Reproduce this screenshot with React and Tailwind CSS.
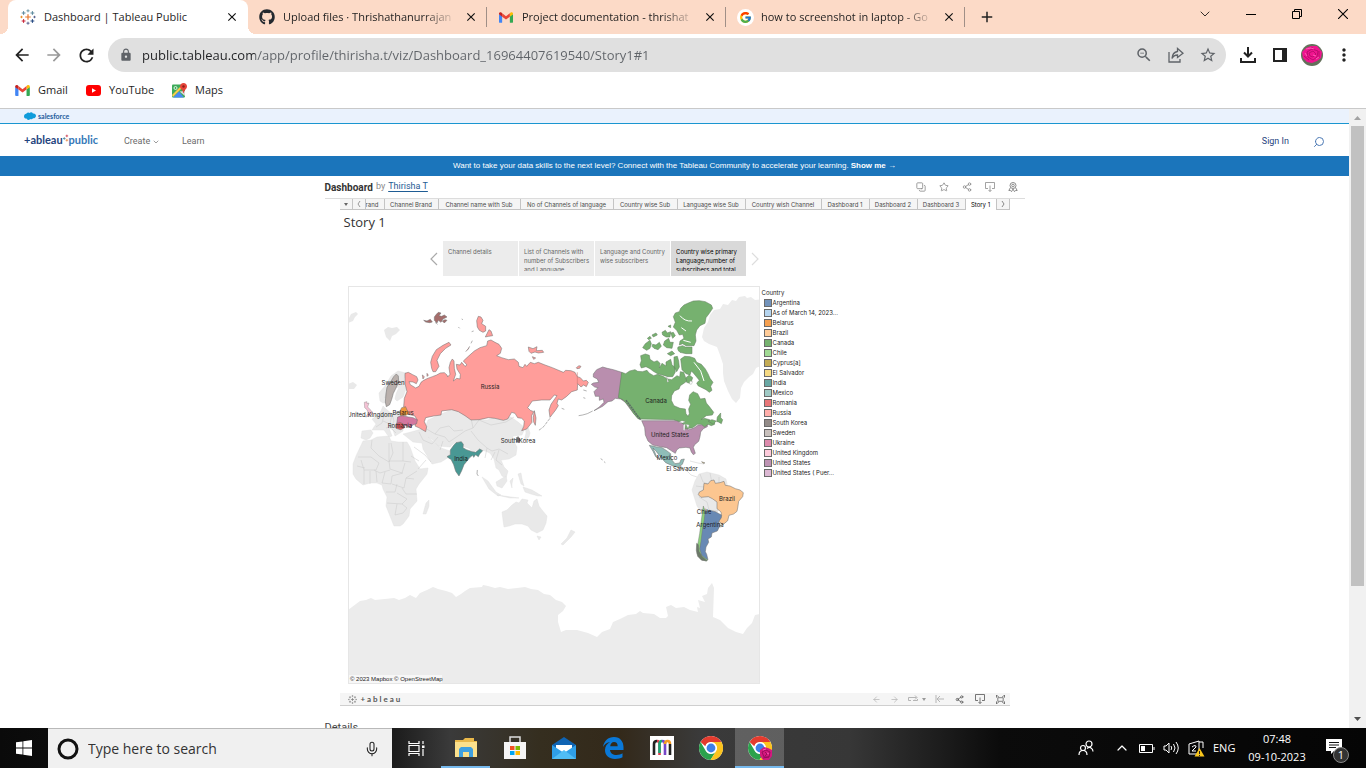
import React from "react";
import {
  MdArrowBack, MdArrowForward, MdRefresh, MdLock, MdClose, MdAdd, MdMoreVert, MdStarBorder, MdZoomOut,
} from "react-icons/md";
import { FaGithub } from "react-icons/fa";
import { FcGoogle } from "react-icons/fc";
import {
  Copy, Star, Share2, ArrowLeft, ArrowRight, Mic, ChevronUp, ChevronDown, Search,
} from "lucide-react";

const UI = "font-['Open_Sans','Noto_Sans',sans-serif]";

function TableauMark({ className = "", mono = false }) {
  const plus = (x, y, r) => `M${x - r} ${y}h${2 * r}M${x} ${y - r}v${2 * r}`;
  const c = (v) => (mono ? "#777" : v);
  return (
    <svg viewBox="0 0 16 16" fill="none" className={className} aria-hidden="true">
      <path d={plus(8, 8, 2.8)} stroke={c("#e8762c")} strokeWidth="1.2" />
      <path d={plus(3.6, 4, 1.9)} stroke={c("#5b879b")} strokeWidth="1" />
      <path d={plus(12.4, 4, 1.9)} stroke={c("#59879b")} strokeWidth="1" />
      <path d={plus(3.6, 12, 1.9)} stroke={c("#c72035")} strokeWidth="1" />
      <path d={plus(12.4, 12, 1.9)} stroke={c("#1f447e")} strokeWidth="1" />
      <path d={plus(8, 1.8, 1.5)} stroke={c("#7099a6")} strokeWidth="1" />
      <path d={plus(8, 14.2, 1.5)} stroke={c("#5c6692")} strokeWidth="1" />
      <path d={plus(1.5, 8, 1.2)} stroke={c("#eb912c")} strokeWidth="1" />
      <path d={plus(14.5, 8, 1.2)} stroke={c("#5c6692")} strokeWidth="1" />
    </svg>
  );
}

function GmailMark({ className = "" }) {
  return (
    <svg viewBox="0 0 16 12" className={className} aria-hidden="true">
      <path d="M0 2v9a1 1 0 0 0 1 1h2.6V4.5z" fill="#4285f4" />
      <path d="M16 2v9a1 1 0 0 1-1 1h-2.6V4.5z" fill="#34a853" />
      <path d="M12.4 1.2V5L16 2.4V1.6C16 .2 14.400-.5 13.300.4z" fill="#fbbc04" />
      <path d="M3.600 5V1.200L8 4.500l4.400-3.300V5L8 8.300z" fill="#ea4335" />
      <path d="M0 1.600v.8L3.600 5V1.200L2.700.4C1.600-.5 0 .2 0 1.600z" fill="#c5221f" />
    </svg>
  );
}

function ChromeMark({ className = "", rose = false }) {
  return (
    <svg viewBox="0 0 24 24" className={className} aria-hidden="true">
      <circle cx="12" cy="12" r="12" fill="#fff" />
      <path d="M12 0a12 12 0 0 1 10.390 6H12a6 6 0 0 0-5.700 4.200L1.610 6A12 12 0 0 1 12 0z" fill="#e33b2e" />
      <path d="M1.610 6A12 12 0 0 0 11.500 24l5.700-9A6 6 0 0 1 6.800 15z" fill="#2ba24c" />
      <path d="M22.390 6A12 12 0 0 1 11.500 24l5.700-9A6 6 0 0 0 12 6z" fill="#fcc31e" />
      <circle cx="12" cy="12" r="5.600" fill="#fff" />
      <circle cx="12" cy="12" r="4.400" fill="#3f7fe8" />
      {rose && (
        <g>
          <path d="M12 14l4-3 4 1 4 2v6l-3 4h-6l-3-4z" fill="#d3187f" />
          <path d="M14 16l4-2 4 2-1 5-5 0zM17 16l2 2-2 2M15 22l6-1" stroke="#8d0b51" strokeWidth=".8" fill="none" />
          <path d="M15 14l3-1M19 17l2 1" stroke="#ff6fc0" strokeWidth=".8" fill="none" />
        </g>
      )}
    </svg>
  );
}

function Rose() {
  return (
    <svg viewBox="0 0 22 22" className="size-[22px]" aria-hidden="true">
      <circle cx="11" cy="11" r="11" fill="#63705a" />
      <path d="M1 8l4-4 5-2 6 0 5 6-1 6-4 3-5 2-5-1-4-4z" fill="#f0148f" />
      <path d="M6 8l5-3 6 2-1 6-4 3-5-3zM8 9l4-2 3 3-3 3-3-1zM3 12l5 4M18 7l0 7M10 3l3 2" stroke="#a80862" strokeWidth=".7" fill="none" />
      <path d="M5 5l5-1 3 1M12 11l3 1M4 9l2 3M15 15l3-2" stroke="#ff62b8" strokeWidth=".9" fill="none" />
    </svg>
  );
}

function Tab({ icon, title, active }) {
  return (
    <div
      className={
        "relative flex h-[34px] items-center " +
        (active ? "w-[240px] rounded-t-lg bg-white pl-3" : "w-[239px] pl-[11px]")
      }
    >
      {active && (
        <>
          <span className="absolute bottom-0 -left-2 size-2 bg-[radial-gradient(circle_at_0_0,transparent_8px,white_8px)]" />
          <span className="absolute bottom-0 -right-2 size-2 bg-[radial-gradient(circle_at_100%_0,transparent_8px,white_8px)]" />
        </>
      )}
      <span className="flex w-4 shrink-0 justify-center">{icon}</span>
      <span
        className={
          "ml-2 w-[172px] shrink-0 overflow-hidden text-[11px] whitespace-nowrap text-[#1f1f1f] " +
          (active ? "" : "[mask-image:linear-gradient(to_right,black_140px,transparent_174px)]")
        }
      >
        {title}
      </span>
      <button aria-label={"Close " + title} className="ml-2 flex size-4 shrink-0 items-center justify-center">
        <MdClose className="size-[14px] text-[#111]" />
      </button>
      {!active && <span className="ml-auto h-5 w-px bg-[#a08f87]" />}
    </div>
  );
}

function BrowserChrome() {
  return (
    <header className={"shrink-0 border-b border-[#c9c9c9] bg-white " + UI}>
      <div className="flex h-[34px] bg-[#fcdac7] pl-2">
        <Tab active icon={<TableauMark className="size-4" />} title="Dashboard | Tableau Public" />
        <Tab icon={<FaGithub className="size-4 text-[#24292f]" />} title="Upload files · Thrishathanurrajan" />
        <Tab icon={<GmailMark className="h-[11px] w-[14px]" />} title="Project documentation - thrishat" />
        <Tab
          icon={<span className="rounded-full bg-white p-[2px]"><FcGoogle className="size-[13px]" /></span>}
          title="how to screenshot in laptop - Go"
        />
        <button aria-label="New tab" className="flex w-11 items-center justify-center">
          <MdAdd className="size-[18px] text-[#222]" />
        </button>
        <div className="ml-auto flex h-7">
          <button aria-label="Search tabs" className="flex w-[46px] items-center justify-center">
            <ChevronDown className="size-4" strokeWidth={1.2} />
          </button>
          <button aria-label="Minimise" className="flex w-[46px] items-center justify-center">
            <span className="h-px w-[10px] bg-black" />
          </button>
          <button aria-label="Restore" className="flex w-[46px] items-center justify-center">
            <svg viewBox="0 0 10 10" className="size-[10px]" fill="none" stroke="#000">
              <path d="M.5 2.500h7v7h-7zM2.500 2.500v-2h7v7h-2" />
            </svg>
          </button>
          <button aria-label="Close window" className="flex w-[46px] items-center justify-center">
            <svg viewBox="0 0 10 10" className="size-[10px]" fill="none" stroke="#000" strokeWidth="1.100">
              <path d="M0 0l10 10M10 0L0 10" />
            </svg>
          </button>
        </div>
      </div>
      <div className="flex h-[42px] items-center pr-[6px] pl-[6px]">
        <button aria-label="Back" className="flex w-8 justify-center"><MdArrowBack className="size-5 text-[#222]" /></button>
        <button aria-label="Forward" className="flex w-8 justify-center"><MdArrowForward className="size-5 text-[#999]" /></button>
        <button aria-label="Reload" className="flex w-8 justify-center"><MdRefresh className="size-[21px] text-[#222]" /></button>
        <div className="ml-[6px] flex h-[34px] flex-1 items-center rounded-full bg-[#e0e0e0] pr-[2px] pl-[11px]">
          <MdLock className="size-[14px] text-[#5f6368]" />
          <input
            aria-label="Address"
            defaultValue="public.tableau.com/app/profile/thirisha.t/viz/Dashboard_16964407619540/Story1#1"
            className="ml-[9px] h-6 flex-1 bg-[linear-gradient(to_right,#202124_113px,#5f6368_113px)] bg-clip-text text-[13px] text-transparent outline-none"
          />
          <button aria-label="Zoom" className="flex w-8 justify-center"><MdZoomOut className="size-[18px] text-[#5f6368]" /></button>
          <button aria-label="Share page" className="flex w-8 justify-center">
            <svg viewBox="0 0 16 16" className="size-4" fill="none" stroke="#5f6368" strokeWidth="1.300">
              <path d="M1 5v10h11v-3M9.500 4.500V1.500L15 6.200 9.500 10.500V8C7 8 5.200 9 4 11.500 4.300 7.500 6 5 9.500 4.500z" />
            </svg>
          </button>
          <button aria-label="Bookmark" className="flex w-8 justify-center"><MdStarBorder className="size-[18px] text-[#5f6368]" /></button>
        </div>
        <div className="ml-[6px] flex items-center">
          <button aria-label="Downloads" className="flex w-8 justify-center">
            <svg viewBox="0 0 16 16" className="size-4" fill="none" stroke="#222" strokeWidth="2">
              <path d="M8 0v9M4 5.500l4 4 4-4M1 11v4h14v-4" />
            </svg>
          </button>
          <button aria-label="Side panel" className="flex w-8 justify-center">
            <svg viewBox="0 0 14 14" className="size-[14px]" fill="none" stroke="#222" strokeWidth="2">
              <path d="M1 1h12v12H1z" /><path d="M9 0h5v14H9z" fill="#222" stroke="none" />
            </svg>
          </button>
          <button aria-label="Profile" className="flex w-8 justify-center"><Rose /></button>
          <button aria-label="Menu" className="flex w-8 justify-center"><MdMoreVert className="size-5 text-[#222]" /></button>
        </div>
      </div>
      <nav className="flex h-8 items-center pb-1 pl-[15px] text-[11px] text-[#1f1f1f]">
        <a href="#gmail" className="flex w-[71px] items-center gap-2">
          <GmailMark className="h-[11px] w-[15px]" />Gmail
        </a>
        <a href="#youtube" className="flex w-[86px] items-center gap-2">
          <svg viewBox="0 0 15 11" className="h-[11px] w-[15px]"><rect width="15" height="11" rx="3" fill="#f00" /><path d="M6 3.200v4.600l4-2.300z" fill="#fff" /></svg>
          YouTube
        </a>
        <a href="#maps" className="flex items-center gap-2">
          <svg viewBox="0 0 15 15" className="size-[15px]">
            <rect y="1.500" width="13" height="13" rx="1" fill="#3dab5a" />
            <path d="M1 14.500l6-6 5 6z" fill="#4a89f3" /><path d="M0 12l9-9 1.500 1.500L1 14z" fill="#f7cb4d" /><path d="M7.500 8.500l5.500 4.500V8z" fill="#d9d9d9" />
            <circle cx="3.500" cy="5" r="1.500" fill="none" stroke="#fff" strokeWidth=".8" />
            <path d="M11.500 0C9.500 0 8 1.500 8 3.500c0 2.300 2.700 3 3.300 6.500h.5C12.500 6.500 15 5.800 15 3.500 15 1.500 13.500 0 11.500 0z" fill="#e5443a" />
            <circle cx="11.500" cy="3.500" r="1.200" fill="#8c1f17" />
          </svg>
          Maps
        </a>
      </nav>
    </header>
  );
}

function SiteHeader() {
  return (
    <div className="font-[Roboto,sans-serif]">
      <div className="flex h-[15px] items-center gap-[2px] border-b border-[#1a96d0] bg-[#eaf2fd] pl-6">
        <svg viewBox="0 0 12 8" className="h-2 w-3"><path d="M2.500 1.500C3.500 0 5 .3 5.500 1 6.500-.2 8.200 0 9 1.500c1.700-.4 3 .7 3 2.200C12 5.500 10.500 6.500 9 6.200 8.200 7.500 6.800 7.300 6.200 7 5 8.500 3 8 2.500 6.500 1 6.700 0 5.700 0 4.400 0 3 .8 2.300 1.500 2z" fill="#109cdb" /></svg>
        <span className="font-[Lato,sans-serif] text-[7px] font-bold text-[#1c5b9c]">salesforce</span>
      </div>
      <div className="flex h-8 items-center pr-6 pl-6 text-[9px] text-[#6b6b6b]">
        <a href="#home" className="flex w-[100px] items-center font-[Lato,sans-serif] text-[11px] font-bold">
          <span className="text-[#1f447e]">+ableau</span>
          <svg viewBox="0 0 7 9" className="mb-1 h-[9px] w-[6px]" fill="none">
            <path d="M0 4.500h3M1.500 3v3" stroke="#59879b" /><path d="M3 1.500h3M4.500 0v3" stroke="#c72035" strokeWidth=".8" /><path d="M3 6.500h3M4.500 5v3" stroke="#e8762c" strokeWidth=".8" />
          </svg>
          <span className="text-[#3578b8]">public</span>
        </a>
        <div className="flex flex-1 items-center pt-[3px]">
          <button className="flex w-[58px] items-center gap-[2px]">Create<ChevronDown className="size-2" strokeWidth={2} /></button>
          <a href="#learn">Learn</a>
          <a href="#signin" className="ml-auto mr-6 text-[#1f447e]">Sign In</a>
          <button aria-label="Search" className="flex size-3 items-center"><Search className="size-3 -scale-x-100 text-[#4d7ab5]" strokeWidth={2} /></button>
        </div>
      </div>
      <div className="flex h-5 items-center justify-center gap-[2px] bg-[#1b75bb] font-['Liberation_Sans',Arial,sans-serif] text-[8px] text-white">
        <span>Want to take your data skills to the next level? Connect with the Tableau Community to accelerate your learning.</span>
        <a href="#community" className="font-bold">Show me →</a>
      </div>
    </div>
  );
}

const DownloadGlyph = () => (
  <svg viewBox="0 0 10 10" className="size-[10px]" fill="none" stroke="currentColor" strokeWidth=".8"><path d="M3 6.500H.5v-6h9v6H7M5 3.500v6M3.500 8L5 9.500 6.500 8" /></svg>
);
const AwardGlyph = () => (
  <svg viewBox="0 0 10 10" className="size-[10px]" fill="none" stroke="currentColor"><circle cx="5" cy="3.500" r="3" /><circle cx="5" cy="3.500" r="1.300" /><path d="M2.500 5.500L.8 8.500l1.700 0 1 1.200L5 7l1.500 2.700 1-1.200 1.700 0-1.700-3" /></svg>
);

const SHEETS = [
  ["rand", "w-[19px] justify-start"],
  ["Channel Brand", "w-[54px] justify-center"],
  ["Channel name with Sub", "w-[82px] justify-center"],
  ["No of Channels of language", "w-[93px] justify-center"],
  ["Country wise Sub", "w-[64px] justify-center"],
  ["Language wise Sub", "w-[68px] justify-center"],
  ["Country wish Channel", "w-[76px] justify-center"],
  ["Dashboard 1", "w-[48px] justify-center"],
  ["Dashboard 2", "w-[48px] justify-center"],
  ["Dashboard 3", "w-[48px] justify-center"],
];

const POINTS = [
  "Channel details",
  "List of Channels with number of Subscribers and Language",
  "Language and Country wise subscribers",
  "Country wise primary Language,number of subscribers and total",
];

const LEGEND = [
  ["Argentina", "bg-[#7393bb]"],
  ["As of March 14, 2023...", "bg-[#b5d4ee]"],
  ["Belarus", "bg-[#f5a050]"],
  ["Brazil", "bg-[#fecb98]"],
  ["Canada", "bg-[#76b26f]"],
  ["Chile", "bg-[#a1da94]"],
  ["Cyprus[a]", "bg-[#c3ab54]"],
  ["El Salvador", "bg-[#f5d983]"],
  ["India", "bg-[#6aa8a4]"],
  ["Mexico", "bg-[#a0cac5]"],
  ["Romania", "bg-[#e87678]"],
  ["Russia", "bg-[#ffaeaa]"],
  ["South Korea", "bg-[#938b88]"],
  ["Sweden", "bg-[#c8c0bc]"],
  ["Ukraine", "bg-[#dc8aac]"],
  ["United Kingdom", "bg-[#fccada]"],
  ["United States", "bg-[#be93b3]"],
  ["United States ( Puer...", "bg-[#dcb8d3]"],
];

const LABELS = [
  ["Russia", 490, 389], ["Sweden", 393, 385], ["United Kingdom", 370, 417], ["Belarus", 403, 415],
  ["Romania", 400, 428], ["South Korea", 518, 443], ["India", 461, 461], ["Canada", 656, 403],
  ["United States", 670, 437], ["Mexico", 667, 460], ["El Salvador", 682, 471], ["Brazil", 727, 501],
  ["Chile", 704, 514], ["Argentina", 710, 527],
];

function WorldMap() {
  return (
    <svg viewBox="348 286 412 398" className="h-[398px] w-[412px] shrink-0" role="img" aria-label="World map of countries">
      <rect x="348" y="286" width="412" height="398" fill="#fff" />
      {/* land without data */}
      <g fill="#e9e9e9" stroke="#dedede" strokeWidth=".4" strokeLinejoin="round">
        <path stroke="none" fill="#ececec" d="M348 610L352 607 356 604 360 601 366 600 371 598 375 600 385 599 394 598 399 600 405 598 410 595 416 598 420 593 427 590 433 587 438 589 446 591 452 593 456 597 461 594 465 591 470 588 482 587 483 585 488 586 495 588 500 587 508 589 517 588 525 587 531 589 538 590 544 594 550 595 556 600 562 602 566 606 563 611 558 615 558 622 561 632 566 630 577 630 588 633 597 637 602 632 610 629 613 622 620 619 628 615 636 614 640 611 643 613 654 614 660 618 666 618 668 616 666 607 671 605 676 608 684 607 690 610 698 612 697 607 700 608 698 600 705 602 702 596 707 594 708 588 712 583 714 588 713 617 720 620 728 628 736 632 743 634 747 628 752 623 755 615 760 614V684H348z" />
        <path stroke="none" fill="#ececec" d="M702 337l2-9 4-6 2-7 4-5 6-1 3-5 5 1 4-5 4 1 3-4 6-1 2 2 4-1 4 3 8-1v66l-7 3-3 6-4 3-5 5-3 6-1 10-4 5-4-4-4-8-4-10-1-8 0-9-3-9-3-8-8-3-5-3z" />
        <path stroke="none" d="M348 320l3-6 5-2 2 2-3 3-2 4-5 2zM384 330l4-3 4 1 5-1 3 3-4 4-4 2-2 5-4-4zM348 384l5-2 4 3-3 4-6 0z" />
        <path d="M363 441l8-1 6-3 12-1 2 5 7 1 9 0 3 5 5 14 5 8 8-1-1 6-8 10-3 5 1 12-7 8-1 7-6 8-3 2-6 0-4-10-4-10 1-9-4-8-1-4-5-2-7 0-7 2-7-6-3-5 0-10 3-8z" />
        <path d="M426 503l3-3 0 6-3 8-3 0zM362 431l9-1 2 3-3 5-4 2-5-2zM372 430l4-6-4-5 5-3 4-5 2-5 3 3 6 5 12-3-1 20-8 5-2-6-4-2 3 8-3 1-5-7-4 0zM380 401l-1-8 6-7 6-10 7-5 8 2-2 6 2 10-3 8-6 4-2-2 1-5 3-7-4 1-4 4-4 11-4 0z" />
        <path d="M403 434l8-2 14-4 3-8 11-5 14-6 8 3 7 4 6 3 13 1 10-3 8 0 6 0 7 5 7 6-3 7-9 1 0 4 4 7-1 8-7 4-8 1 3 7 4 4-2 7-4-2-3-6-3-2-2-9-4-6-5-2-6-2-5 3-6-4-7-2-6-4-5 5-12-1-5-6-5-3 7 6 6 5 9 3-1 6-8 5-9 2-9-15-1-6-9-1z" />
        <path d="M482 477l6 4 8 11 5 3-3 1-9-7zM496 482l5-3 5-3 1 5-5 7-5-2zM510 481l3-3-1 6 0 4zM523 487l9 3 10 6-4 0-7-2-6-2zM497 495l14 2 8 1-9 0z" />
        <path d="M502 512l5-2 5-5 4-3 3 1 3-4 6 1-1 3 5 5 2-7 3-2 2 7 3 4 5 6-1 7-3 7-6 3-6-3-3-4-6-2-7 0-6 2-5 1-1-7zM537 536l4 1-2 3zM571 530l4 2-4 5-8 8-2-1 6-6z" />
        <path d="M518 474l3-1 1 6 2 7-3-2zM525 425l3 2 2 6-1 4-5 4 2-8z" />
        <path d="M692 490l3-9 4-7 8-2 12 3 7 4 3 14-13 21 7 6-2 8-17-12-7-10z" />
        <path d="M682 468l5 3 4 4 6 2M690 461l8 2 6 1" fill="none" stroke="#bbb" />
      </g>
      <g fill="none" stroke="#c8c8c8" strokeWidth=".5">
        <path d="M372 440l-1 8 8 8 10 6 4-9-2-10M358 457h13l8 6-3 7-12 0-3-10M389 443l0 18 14 0M403 442v19l8 1M389 461l1 8 12 4 3-10M374 470l6 3 10-3M364 470v14M370 471l0 13M376 471l1 11M385 472l-3 11 9 1 1-8 11-3M392 484l12 4 2-10 8 1M386 492l9 0 2-8M387 503l15 1 5-5-10-6M397 504l-2 11 8-2 4-5-5-4M402 488l4 6 11 0M357 466l8 2M406 478l11-7M411 456l8 5M376 427l6-4 2-8M383 421l7 3 2-10M386 428l7-2M392 414l2 7-3 7M396 433l-4-4M385 398l3-14 5-6" />
        <path d="M425 428l10 6 10 3 4 5 9-6 7-5 8-3-2-10M435 434l5-6 9-2 5 5 9-1M419 432l4 8 9 4 6-7M440 450l3-9M473 428l6-8 12 5 15-3 8-5M471 431l7 9 9 8 5 3 7-2 9 5M487 448l-2 10M491 460l4-8M499 450l-3 10 6 5M414 447l11 8 6 7M426 460l-8 9" />
        <path d="M700 474l3 8 8 3M710 473l2 10M719 477l0 6M696 486l7 1 4-4M699 497l8 5 2 8M707 510l11 1" />
      </g>
      <g stroke="#6f6f6f" strokeWidth="1.600" strokeLinejoin="round" transform="translate(345 285) scale(.33333)">
        <g fill="#ff9d9a">
          <path d="M180 265L190 262 203 269 215 275 219 285 214 296 204 291 192 290 196 299 212 309 222 304 228 292 236 286 246 281 262 275 275 270 286 264 298 263 306 270 308 276 315 268 312 248 316 232 322 222 327 228 328 250 332 268 325 288 335 280 345 282 346 268 336 252 334 238 345 240 350 232 360 244 366 240 355 228 370 214 388 198 405 188 425 182 428 168 438 165 450 172 462 178 470 190 466 205 455 212 470 218 490 224 508 222 520 232 522 244 534 248 540 238 545 244 556 232 568 236 580 232 600 240 622 248 655 262 662 256 678 257 690 262 697 275 706 278 715 288 724 286 730 292 724 305 716 300 708 306 698 296 697 315 680 320 664 335 650 345 640 342 636 355 640 362 632 375 622 388 615 397 612 375 618 358 636 332 628 330 615 345 590 345 562 348 548 368 556 376 566 380 560 392 561 412 545 432 530 437 536 425 538 408 530 400 518 398 510 385 500 382 488 402 475 406 450 400 430 398 402 404 378 405 360 392 340 380 320 374 290 378 288 390 266 393 242 398 238 410 245 425 242 440 225 430 210 423 216 405 210 393 190 388 186 375 176 365 178 340 186 320 180 295z" />
          <path d="M260 250l-3-18 5-18 12-20 20-13 18-9 6 8-16 10-16 16-10 20 6 18-10 16-8 0z" />
          <path d="M395 107l5-13 8 2 6 10-4 10 12 8 0 14-8 4-11-6-6-10zM432 134l6 4 5 14-12 2-10 2z" />
          <path d="M550 186l14 5 12-6-2 12 18-1 4 6-16 2-10-3-12 4-6-6zM562 215l10 4-6 4zM694 248l8-6 6 2-4 6-8 1zM232 270l6 5-4 7zM246 265l4 6-4 3zM568 377l5 22-2 22-5-10-1-14z" />
        </g>
        <g fill="#a56d6b">
          <path d="M236 106l10 2 10-5 6 8-8 2-12-2zM268 96l6-8 6-6 8 2-6 8 8 2 8-4 8 6-12 6-6 10-8-6-4 8-8-8zM292 108l8-4 6 2-8 8zM270 112l8 6M350 102l4 2M340 126l4 4M380 140l6-2M362 200l8-8 4-8M378 175l4-8" />
        </g>
        <path d="M615 400l-8 10-10 14-10 8-6 4M650 370l8 3" fill="none" strokeDasharray="10 3" />
        <path fill="none" stroke="#c76f6c" d="M697 262v34" />
        <path fill="#499894" d="M333 473l16-3 6 8-1 10 10 6 18 6 10 2 12-10 9 5-9 10-4 8-8-6-6 8-3-6-8 6-18 22-7 18-8 16-10-14-6-20-8-16-4-2-8-6 10-6 0-14 10-14z" />
        <path fill="#b9b0ac" d="M146 275l8-8 6 6 1 18-8 18-8 16-5 18-6 16-10 6-3-14 2-24 3-20 10-14z" />
        <path fill="#f1963a" d="M164 380l6-12 12-3 4 10 6 8-8 8-18 1z" />
        <path fill="#d4779f" d="M158 396l14-4 18 4 14 2 13 6-2 12-12 4-6 8-14-6-12-6-16 2z" />
        <path fill="#e25b60" d="M154 416l10-4 10 4 5 12-12 6-14-4z" />
        <path fill="#f4c2d4" strokeWidth="1" d="M58 352l8-2 0 6 6-2-4 12 8 8 7 10-6 8-15 4 8-12-4-10-7-6z" />
        <path fill="#6f6a68" d="M514 458l6-3 5 8-3 10-7-2z" />
        <g transform="translate(615 0)">
          <g fill="#b98eae">
            <path d="M130 267L140 254 158 246 172 250 190 254 215 262V340L229 346 241 362 259 386 272 404 262 398 242 374 226 352 212 342 196 340 186 348 174 350 158 364 146 370 132 377 148 366 162 352 160 342 148 346 148 334 136 334 132 320 144 308 134 306 124 298 130 294 146 292 142 282 130 276z" />
            <path fill="none" d="M128 378l-16 8-14 4-12 2M100 315l10 3M100 338l6 2" />
            <path d="M275 407h105l18 4 14 8 2 16 18-6 12-8 12-2 8-6 8 2 0 10-12 6-8 10-2 14-4 14-12 10-4 8 6 18-6 4-6-8-4-12-12-2-20 2-8 6-4 10-14-9-12-8-24-4-18-4-14-12-8-18-2-22z" />
          </g>
          <path fill="#8fbdb8" d="M298 481l22 5 16 2 14 9 12 9 1 16 12 14 14-2 4-10 10-2-6 16-12 8-16-3-22-10-16-18-14-18-8-8 10 24 6 8-8-6-8-16z" />
          <path fill="#d9c27a" d="M388 546l10 4-2 3zM455 530l10 4-6 1z" />
          <path fill="#777" d="M152 521l6 4M162 530l4 3" />
          <g fill="#76b16f" stroke="#657e60">
            <path d="M215 262l12 4 12-8 16-4 8 5 14 1 14-4 6 8 14 8 12-4 16 6 14 8 12 2 16-12 8 4 2-16 10 2 6 16 6 8-10 8-12 8-4 10-14 6-8 14-1 14 8 16 18 8 16 2 2 14 6 8 4-8-2-14 6-14-6-12 3-16 10-10 14 6 8 16 14-2 4 14 10 12 12 16-4 8-18 2-16 12 10-4 16 4 0 8 14-2 1 8-10 4-10-4-10 8-10-8-12 0-14 10-22 4-2-12-14-10-20-6-105-2-14-16-14-22-18-20-14-6z" />
            <path d="M272 212l14-5 12 4 2 12 12 8 10-4 8 8-2 14 8-14 12 8 0-12 14-8 4 16 8 8 2 14-8 14-14 0-20-6-10-2-14-8-10-8-12-6-14 4-4-10 4-12zM372 216l10-2 4 14 2 18-8 14-8-14z" />
            <path d="M392 222L404 214 420 215 434 220 440 232 454 238 466 252 474 266 480 280 489 292 482 304 486 316 478 322 468 314 456 308 444 302 440 294 448 286 440 276 430 264 424 258 420 270 408 266 396 254z" />
            <path d="M370 95L376 84 388 80 392 70 402 60 415 54 430 48 448 47 466 50 484 60 488 70 478 85 468 98 465 115 450 122 440 135 436 150 438 168 432 182 408 182 398 176 388 180 390 168 402 160 398 148 388 150 380 136 370 126 376 112z" />
            <path d="M384 186l14-4 8 4 20 0 0 20-18 0-18-4-8-8z" />
            <path d="M278 188l8-12 14-10 4 10-4 14-10 6zM308 178l10 2 10-8 6 12-10 10-12-4-6-6zM306 150l12-6 4 6-12 6zM292 160l8-6 4 6-8 4zM336 142l10-6 6 8 10-4-2 16-12 0-10-6zM344 168l12-8 4 12 10 0-4 18-16-2-10-8zM354 124l8-4 0 8zM352 206l14-8 8 8-12 6zM362 144l8-2 6 10-8 8zM408 278l10-8 10 8-6 18-12-4zM474 408l12-4 12 4-8 10zM500 410l2-14 10-12 0 14 6 6-4 12-10-6z" />
            <path d="M228 346l6 8 8 10 10 14 10 14 10 12" fill="none" stroke="#5d6e66" strokeWidth="5" strokeDasharray="6 2" />
          </g>
          <g fill="#fff" stroke="#8a8a8a" strokeWidth="1"><path d="M386 412l10-5 10 3-8 4zM400 420l6-4-2 22-4-4zM408 418l10 2-4 10zM420 288l8 2-4 8-6-2zM350 276l6 14-4 2z" /><path d="M390 92q14 18 36 16M394 128l14 10M400 166l22 6M380 190l4 16M432 232l20 26 10 30" fill="none" stroke="#fff" strokeWidth="3" /></g>
        </g>
        <g transform="translate(285 525)">
          <path fill="#fcc690" d="M778 96l12-6 2-20 12 2 8-10 10-2 4 10 14-2 12-4 4 12 14 2 16 8 14 4 10 8-2 12-12 14-3 20-2 10-10 8-14 4-4 16-14 12-14-12 10-14-2-12-12-10 0-20-14-10-12-6-22 2-8-8z" />
          <path fill="#6889b4" d="M796 154l12-3 18 4 18 10 0 8-8 12 4 12-8 16-16 6-2 12-10 6 2 10-8 14-2 14 4 8 4 16-18-4-8-24 6-60z" />
          <path fill="#8cd17d" strokeWidth="1.200" d="M790 138l5 14-2 26-6 32-4 34-4 22 6 20 18 14-4 4-16-6-12-18 2-26 6-34 5-40z" />
          <path fill="#6b7a68" d="M770 250l5 4 2 20 10 16 14 12-16-1-12-12-4-18z" />
          <path fill="none" d="M112 30l-1 12 4 6" />
        </g>
      </g>
      <g className="font-[Inter,sans-serif]" fontSize="6" fill="#1d1d1d" textAnchor="middle">
        {LABELS.map(([name, x, y]) => <text key={name} x={x} y={y}>{name}</text>)}
      </g>
      <rect x="349" y="675" width="93" height="8" fill="#f7f7f7" />
      <text x="350" y="681" fontSize="6" fill="#222" className="font-['Liberation_Sans',Arial,sans-serif]">© 2023 Mapbox © OpenStreetMap</text>
      <rect x="348.500" y="286.500" width="411" height="397" fill="none" stroke="#e6e6e6" />
    </svg>
  );
}

function Viz() {
  const cell = "flex items-center border-r border-b border-[#c4c4c4] bg-[#f5f5f5] ";
  return (
    <main className="mx-auto w-[700px]">
      <div className="flex h-[23px] items-center border-b border-[#dcdcdc] font-[Roboto,sans-serif] text-[9px]">
        <h1 className="text-[10px] font-bold text-[#333]">Dashboard</h1>
        <span className="ml-[3px] text-[#8a8a8a]">by</span>
        <a href="#author" className="ml-[3px] text-[#1f5c94] underline underline-offset-2">Thirisha T</a>
        <div className="ml-auto flex gap-[13px] pr-[7px] text-[#8c8c8c]">
          <button aria-label="Make a copy"><Copy className="size-[10px] -scale-100" strokeWidth={2} /></button>
          <button aria-label="Favorite"><Star className="size-[10px]" strokeWidth={2} /></button>
          <button aria-label="Share"><Share2 className="size-[10px]" strokeWidth={2} /></button>
          <button aria-label="Download"><DownloadGlyph /></button>
          <button aria-label="Nominate"><AwardGlyph /></button>
        </div>
      </div>
      <section className="mx-auto w-[670px] font-[Inter,sans-serif]">
        <div className="flex h-[11px] text-[6px] whitespace-nowrap text-[#4a4a4a]">
          <button aria-label="All sheets" className={cell + "w-[13px] justify-center"}>
            <svg viewBox="0 0 4 3" className="h-[3px] w-1"><path d="M0 0h4L2 3z" fill="#666" /></svg>
          </button>
          <button aria-label="Previous sheets" className={cell + "w-[13px] justify-center"}>
            <svg viewBox="0 0 4 6" className="h-[6px] w-1" fill="none" stroke="#999"><path d="M3 0L1 3l2 3" /></svg>
          </button>
          {SHEETS.map(([name, w]) => (
            <button key={name} className={cell + "overflow-hidden " + w}>{name}</button>
          ))}
          <button className="flex w-[31px] items-center justify-center border-r border-[#c4c4c4] bg-white text-black">Story 1</button>
          <button aria-label="Next sheets" className={cell + "w-[13px] justify-center"}>
            <svg viewBox="0 0 4 6" className="h-[6px] w-1" fill="none" stroke="#888"><path d="M1 0l2 3-2 3" /></svg>
          </button>
        </div>
        <h2 className="flex h-[31px] items-center pb-[5px] pl-1 font-['Open_Sans',sans-serif] text-[13px] text-[#333]">Story 1</h2>
        <div className="flex h-[35px] w-[510px] items-center justify-center">
          <button aria-label="Previous story point" className="pr-[5px]">
            <svg viewBox="0 0 8 14" className="h-[14px] w-2" fill="none" stroke="#aaa" strokeWidth="1.200"><path d="M7 1L1 7l6 6" /></svg>
          </button>
          <div className="grid h-full grid-cols-4 gap-px">
            {POINTS.map((p, i) => (
              <button
                key={p}
                className={
                  "flex w-[75px] items-start overflow-hidden pt-[6px] pr-[2px] pb-1 pl-[5px] text-left text-[6px] leading-[9px] " +
                  (i === 3 ? "bg-[#d9d9d9] text-black" : "bg-[#ececec] text-[#666]")
                }
              >
                <span className="h-[24px] overflow-hidden">{p}</span>
              </button>
            ))}
          </div>
          <button aria-label="Next story point" className="pl-[5px]">
            <svg viewBox="0 0 8 14" className="h-[14px] w-2" fill="none" stroke="#ddd" strokeWidth="1.200"><path d="M1 1l6 6-6 6" /></svg>
          </button>
        </div>
        <div className="mt-[10px] flex pl-2">
          <WorldMap />
          <div className="pt-[2px] pl-[2px] text-[6px] leading-[10px] text-[#222]">
            <div>Country</div>
            <ul className="pl-[2px]">
              {LEGEND.map(([name, color]) => (
                <li key={name} className="flex items-center gap-px whitespace-nowrap">
                  <span className={"size-2 border border-[#6a6a6a] " + color} />
                  {name}
                </li>
              ))}
            </ul>
          </div>
        </div>
        <div className="mt-[9px] flex h-[13px] items-center border-b border-[#cfcfcf] bg-[#f5f5f5] pl-2 text-[8px] text-[#555]">
          <TableauMark mono className="size-[9px]" />
          <span className="ml-1 font-[Lato,sans-serif] font-bold whitespace-pre">+ a b l e a u</span>
          <div className="ml-auto flex items-center gap-[11px] pr-[5px] text-[#b5b5b5]">
            <div className="flex items-center gap-[9px]">
              <button aria-label="Undo"><ArrowLeft className="size-[9px]" /></button>
              <button aria-label="Redo"><ArrowRight className="size-[9px]" /></button>
              <button aria-label="Replay" className="flex items-center gap-1">
                <svg viewBox="0 0 10 8" className="h-2 w-[10px]" fill="none" stroke="currentColor"><path d="M3 5.500H.5v-3h8M7 .5l2 2-2 2M9.500 4v1.500H5" /></svg>
                <svg viewBox="0 0 4 3" className="h-[3px] w-1"><path d="M0 0h4L2 3z" fill="#999" /></svg>
              </button>
              <button aria-label="Revert">
                <svg viewBox="0 0 9 8" className="h-2 w-[9px]" fill="none" stroke="currentColor"><path d="M1 0v8M9 4H2M5 1L2 4l3 3" /></svg>
              </button>
            </div>
            <button aria-label="Share view" className="text-[#555]"><Share2 className="size-[9px]" /></button>
            <button aria-label="Download view" className="text-[#555]"><DownloadGlyph /></button>
            <button aria-label="Full screen" className="text-[#555]">
              <svg viewBox="0 0 10 10" className="size-[9px]" fill="none" stroke="currentColor" strokeWidth=".8"><path d="M0 1h2l1 1M10 1H8L7 2M0 9h2l1-1M10 9H8L7 8M2 3h6v4H2zM.5 0v3M9.500 0v3M.5 10V7M9.500 10V7" /></svg>
            </button>
          </div>
        </div>
      </section>
      <h3 className="mt-[15px] font-[Roboto,sans-serif] text-[11px] leading-[14px] text-[#444]">Details</h3>
    </main>
  );
}

function TaskIcon({ label, active, running, children }) {
  return (
    <button
      aria-label={label}
      className={
        "flex h-full w-[49px] items-center justify-center " +
        (active ? "bg-white/20 " : "") + (running ? "border-y-2 border-t-transparent border-b-[#76b9ed]" : "")
      }
    >
      {children}
    </button>
  );
}

function Taskbar() {
  return (
    <footer
      className={
        "flex h-10 shrink-0 items-center bg-[linear-gradient(to_right,#0a0a0a_0px,#1b1b1b_392px,#3a3a3a_450px,#352e1f_540px,#33291a_620px,#3a3a3a_700px,#373737_850px,#0b0b0b_1000px,#050505_1366px)] text-white " + UI
      }
    >
      <button aria-label="Start" className="flex h-full w-12 items-center justify-center">
        <svg viewBox="0 0 16 16" className="size-4" fill="#fff"><path d="M0 2.300L6.500 1.400v6.200H0zM7.300 1.300L16 0v7.600H7.300zM0 8.400h6.500v6.200L0 13.700zM7.300 8.400H16V16l-8.700-1.300z" /></svg>
      </button>
      <label className="flex h-full w-[344px] items-center border-t border-[#b9b9b9] bg-[#f0f0f0] pl-[9px] text-[#222]">
        <svg viewBox="0 0 22 22" className="size-[22px]"><circle cx="11" cy="11" r="9" fill="none" stroke="#111" strokeWidth="3" /></svg>
        <input
          type="search"
          aria-label="Type here to search"
          placeholder="Type here to search"
          className="ml-[9px] w-[220px] flex-1 bg-transparent text-[14px] outline-none placeholder:text-[#333]"
        />
        <Mic className="mr-3 size-4 text-[#222]" strokeWidth={1.6} />
      </label>
      <TaskIcon label="Task view">
        <svg viewBox="0 0 17 15" className="h-[15px] w-[17px]" fill="none" stroke="#fff" strokeWidth="1.200"><path d="M1 0v2.500h10V0M1 4.500h10v6H1zM1 15v-2.500h10V15M15 0v3M15 8v7" /><path d="M14 4.500h2.500v2.500H14z" fill="#fff" stroke="none" /></svg>
      </TaskIcon>
      <TaskIcon label="File Explorer" running>
        <svg viewBox="0 0 22 20" className="h-5 w-[22px]"><path d="M0 2h8l2-2h9v3H22v15H0z" fill="#e9b84a" /><path d="M0 4h22v15H0z" fill="#fbe08c" /><path d="M4 19v-8l2-2h10l2 2v8h-4v-5H8v5z" fill="#3fa0e0" /></svg>
      </TaskIcon>
      <TaskIcon label="Store">
        <svg viewBox="0 0 24 24" className="size-6"><path d="M7 7V1h10v6" fill="none" stroke="#ddd" strokeWidth="1.500" /><path d="M1 6h22v17H1z" fill="#f5f5f5" /><path d="M7 10h4.500v4H7z" fill="#f25022" /><path d="M12.500 10H17v4h-4.500z" fill="#7fba00" /><path d="M7 15h4.500v4H7z" fill="#00a4ef" /><path d="M12.500 15H17v4h-4.500z" fill="#ffb900" /></svg>
      </TaskIcon>
      <TaskIcon label="Mail">
        <svg viewBox="0 0 24 22" className="h-[22px] w-6"><path d="M0 8l12-8 12 8v14H0z" fill="#0f64b4" /><path d="M4 8h16v8H4z" fill="#fff" /><path d="M0 8l12 8 12-8v14H0z" fill="#2f9fe8" /><path d="M0 22l12-9 12 9z" fill="#50bdf5" /></svg>
      </TaskIcon>
      <TaskIcon label="Edge">
        <svg viewBox="0 0 22 22" className="size-[22px]"><path d="M1 10C2 4 6 0 12 0c6.500 0 9.500 5 9.500 10v3H8c.2 3 3 5 6.500 5 2.500 0 4.500-.7 6-1.700v4C18.500 21.400 16 22 13 22 7 22 3 18.500 3 13c0-3.500 2-6.500 5-8-4 .8-6 3-7 5zM8.200 9.200h7.500C15.700 6.500 14.500 5 12 5 9.900 5 8.500 6.800 8.200 9.200z" fill="#0a78d7" /></svg>
      </TaskIcon>
      <TaskIcon label="Mobile app">
        <svg viewBox="0 0 24 24" className="size-6" fill="none" strokeWidth="2.600"><path d="M0 0h24v24H0z" fill="#fff" /><path d="M4 19V8q0-3 3-3" stroke="#222" /><path d="M7 5q2.500 0 2.500 3v11" stroke="#e03a4c" /><path d="M9.500 17V8q0-3 2.500-3" stroke="#18a979" /><path d="M12 5q3 0 3 3v11" stroke="#7646c7" /><path d="M15 8q0-3 2.500-3Q20 5 20 8" stroke="#f59a23" /><path d="M20 8v11" stroke="#222" /></svg>
      </TaskIcon>
      <TaskIcon label="Chrome"><ChromeMark className="size-6" /></TaskIcon>
      <TaskIcon label="Chrome profile" active running><ChromeMark rose className="size-6" /></TaskIcon>
      <div className="ml-auto flex h-full items-center text-[12px]">
        <button aria-label="People" className="mr-[20px]">
          <svg viewBox="0 0 16 16" className="size-4" fill="none" stroke="#fff" strokeWidth="1.200"><circle cx="11" cy="4" r="3" /><circle cx="5" cy="8" r="2.500" /><path d="M1 15c0-3 2-4.500 4-4.500S9 12 9 15M9 8.500c3-2.500 6 0 6 3" /></svg>
        </button>
        <button aria-label="Hidden icons" className="mr-[9px]"><ChevronUp className="size-4" strokeWidth={1.800} /></button>
        <svg viewBox="0 0 16 9" className="mr-2 h-[9px] w-4" fill="none" stroke="#fff"><path d="M.5.5h13v8H.5zM15 3v3" /><path d="M2 2h4v5H2z" fill="#fff" stroke="none" /></svg>
        <svg viewBox="0 0 17 14" className="mr-2 h-[14px] w-[17px]" fill="none" stroke="#fff"><path d="M1 5h2l3-3v10L3 9H1zM8 5q1.500 2 0 4M10.500 3q3 4 0 8M13 1q4.500 6 0 12" /></svg>
        <svg viewBox="0 0 17 17" className="mr-2 size-[17px]" fill="none" stroke="#fff"><path d="M1 4l10-3v13L1 14zM11 2h4v6M4 7q4-3 4 0L4 11h4" /><path d="M11.500 8l5 8.500h-10z" fill="#f8c51c" stroke="none" /><path d="M11.500 11v3M11.500 15v1" stroke="#222" /></svg>
        <span className="mr-2 w-[25px] text-[11px]">ENG</span>
        <div className="mr-4 w-[62px] text-center text-[11px] leading-[18px]">
          <div>07:48</div>
          <div>09-10-2023</div>
        </div>
        <button aria-label="Notifications" className="relative mr-[10px] flex h-full w-8 items-center pl-[2px]">
          <svg viewBox="0 0 16 15" className="mb-1 h-[15px] w-4"><path d="M0 0h16v12H8l-3 3v-3H0z" fill="#fff" /><path d="M3 3.500h10M3 6h10M3 8.500h7" stroke="#111" /></svg>
          <span className="absolute top-[19px] left-[9px] flex size-4 items-center justify-center rounded-full border border-[#888] bg-[#333] text-[11px]">1</span>
        </button>
      </div>
    </footer>
  );
}

export default function App() {
  return (
    <div className="flex h-screen flex-col overflow-hidden bg-white">
      <BrowserChrome />
      <div className="flex min-h-0 flex-1">
        <div className="min-w-0 flex-1 overflow-hidden">
          <SiteHeader />
          <Viz />
        </div>
        <div className="flex w-[17px] flex-col items-center bg-[#f1f1f1]" aria-hidden="true">
          <svg viewBox="0 0 17 17" className="size-[17px] shrink-0"><path d="M5 11h7L8.500 7z" fill="#a3a3a3" /></svg>
          <div className="h-[460px] w-[13px] bg-[#c1c1c1]" />
          <svg viewBox="0 0 17 17" className="mt-auto size-[17px] shrink-0"><path d="M5 6h7l-3.500 4z" fill="#505050" /></svg>
        </div>
      </div>
      <Taskbar />
    </div>
  );
}
